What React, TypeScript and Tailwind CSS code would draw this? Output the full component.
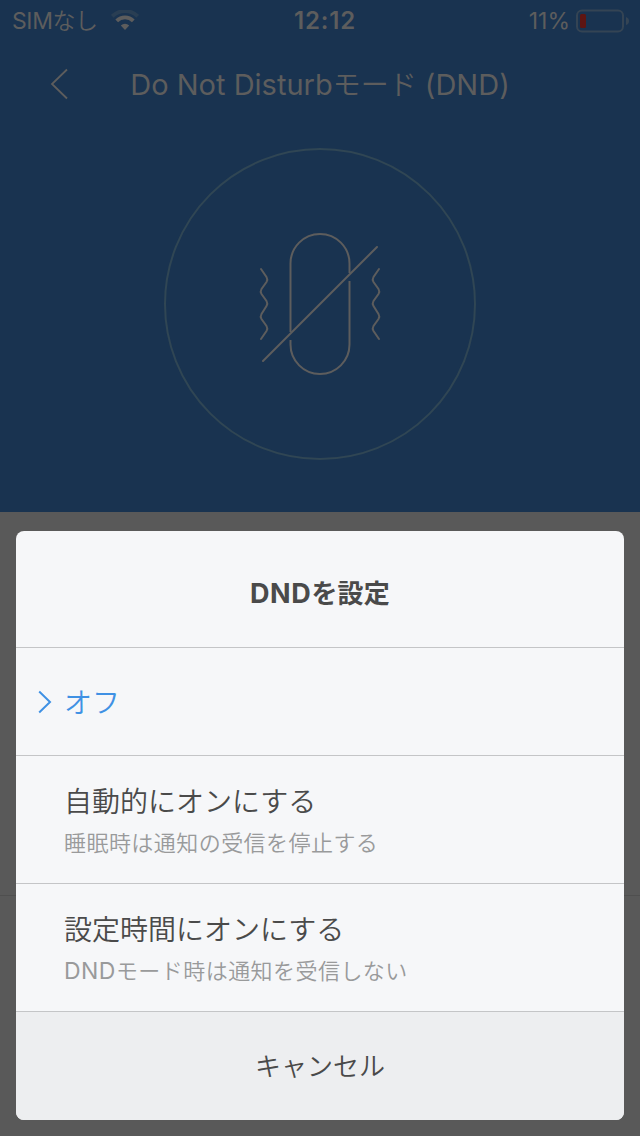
import * as React from 'react';

const options = [
  { title: "自動的にオンにする", prefix: "", description: "睡眠時は通知の受信を停止する" },
  { title: "設定時間にオンにする", prefix: "DND", description: "モード時は通知を受信しない" },
];

function StatusBar() {
  return (
    <div className="grid grid-cols-3 items-center h-10 pt-px pl-3 pr-[11px] text-[23px] leading-10">
      <div className="flex items-center gap-[13px]">
        <span className="font-[350] whitespace-nowrap tracking-[-0.4px]">
          <span className="font-normal">SIM</span>なし
        </span>
        <svg className="w-7 h-5 -mt-0.5" viewBox="0 0 28 20" fill="none">
          <path d="M1.3 6.3A18 18 0 0 1 26.7 6.3" stroke="#293e53" strokeWidth="4" />
          <path d="M5.7 10.8A11.8 11.8 0 0 1 22.3 10.8" stroke="currentColor" strokeWidth="3.8" />
          <path d="M9.8 15.5A6 6 0 0 1 18.2 15.5L14 20Z" fill="currentColor" />
        </svg>
      </div>
      <span className="pl-[9px] text-center text-[24px] font-semibold tracking-[0.8px]">12:12</span>
      <div className="flex items-center justify-end gap-[6px]">
        <span>11%</span>
        <svg className="w-[53px] h-6 -mt-px" viewBox="0 0 53 24" fill="none">
          <rect x="1" y="1.5" width="46" height="21" rx="5" stroke="#344454" strokeWidth="2" />
          <rect x="4" y="5" width="6" height="14" rx="1.5" fill="#5e1512" />
          <path d="M50 8q3 1 3 4t-3 4Z" fill="#344454" />
        </svg>
      </div>
    </div>
  );
}

function Header() {
  return (
    <header className="relative flex items-center justify-center h-[88px] pt-0.5">
      <svg className="absolute left-[50px] top-[28px] w-5 h-8" viewBox="0 0 20 32" fill="none">
        <path d="M17 1.5L2 16L17 30.5" stroke="currentColor" strokeWidth="1.8" />
      </svg>
      <h1 className="text-[29px] whitespace-nowrap">
        Do Not Disturb<span className="text-[28px] font-[350]">モード</span> (DND)
      </h1>
    </header>
  );
}

function VibrationOff() {
  return (
    <div className="flex items-center justify-center w-[312px] h-[312px] mt-5 pt-px mx-auto rounded-full border-2 border-[#304654]">
      <svg className="w-[160px] h-[170px] mt-px" viewBox="0 0 160 170" fill="none" stroke="currentColor" strokeWidth="2">
        <path d="M109.5 53V43.5A29.5 29.5 0 0 0 50.5 43.5V112M50.5 120V124.5A29.5 29.5 0 0 0 109.5 124.5V61" />
        <path d="M23 141L137 27" strokeLinecap="round" />
        <path
          d="M21 49L26.5 57Q28 59.5 26.5 62L21.5 69Q20 71.5 21.5 74L26.5 81Q28 83.5 26.5 86L21.5 94Q20 96.5 21.5 99L26.5 106Q28 108.5 26.5 111L21 119"
          strokeLinecap="round"
        />
        <path
          d="M139 49L133.5 57Q132 59.5 133.5 62L138.5 69Q140 71.5 138.5 74L133.5 81Q132 83.5 133.5 86L138.5 94Q140 96.5 138.5 99L133.5 106Q132 108.5 133.5 111L139 119"
          strokeLinecap="round"
        />
      </svg>
    </div>
  );
}

function ActionSheet() {
  return (
    <div className="absolute inset-x-4 top-[531px] h-[589px] rounded-lg overflow-hidden bg-[#f6f7f9] text-[#4a4a4a] divide-y divide-[#c4c5c7]">
      <div className="flex items-center justify-center h-[117px] pt-2.5">
        <h2 className="text-[26px] font-bold leading-9 tracking-[0.2px]">
          <span className="text-[27px] tracking-[0.6px]">DND</span>を設定
        </h2>
      </div>
      <button className="flex items-center w-full h-[108px] pl-[21px] text-[#3f91e4]">
        <svg className="w-4 h-6" viewBox="0 0 16 24" fill="none">
          <path d="M2.2 1.5L13 12L2.2 22.5" stroke="currentColor" strokeWidth="2" />
        </svg>
        <span className="ml-[11px] mt-0.5 text-[28px] font-[350]">オフ</span>
      </button>
      {options.map((option) => (
        <button key={option.title} className="flex flex-col items-start w-full h-32 pt-[26px] pl-12 text-left">
          <span className="text-[28px] leading-10 font-[350]">{option.title}</span>
          <span className="mt-px text-[22px] leading-10 font-[350] tracking-[0.45px] text-[#999a9b]">
            {option.prefix && <span className="text-[23px] font-normal">{option.prefix}</span>}
            {option.description}
          </span>
        </button>
      ))}
      <button className="flex items-center justify-center w-full h-[109px] bg-[#edeef0] text-[26px] font-[350]">
        キャンセル
      </button>
    </div>
  );
}

function App() {
  return (
    <div className="relative w-[640px] h-[1136px] overflow-hidden bg-[#595959] text-[#5d5d5d] font-['Inter','Noto_Sans_CJK_JP',sans-serif]">
      <div className="h-[512px] bg-[#193350]">
        <StatusBar />
        <Header />
        <VibrationOff />
      </div>
      <div className="h-96 border-b border-[#4f4f4f]" />
      <ActionSheet />
    </div>
  );
}

export default App;
